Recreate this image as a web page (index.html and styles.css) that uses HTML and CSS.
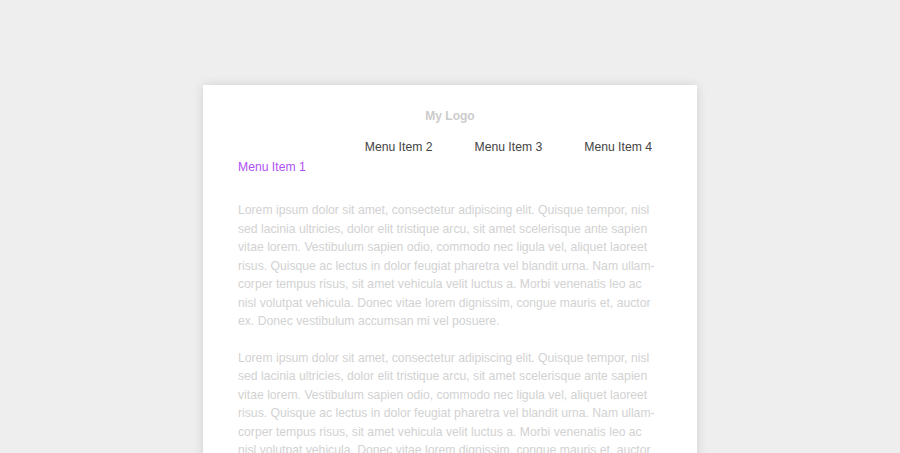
FILE: index.html
```html
<!DOCTYPE html>
<html lang="en">
<head>
  <meta charset="UTF-8">
  <title>My Logo</title>
  <meta name="viewport" content="width=device-width, initial-scale=1.0">
  <link rel="stylesheet" href="styles.css">
</head>
<body>
  <div class="page">
    <header>
      <div class="logo">My Logo</div>
      <nav>
        <div class="nav-row right">
          <a href="#">Menu Item 2</a>
          <a href="#">Menu Item 3</a>
          <a href="#">Menu Item 4</a>
        </div>
        <div class="nav-row">
          <a href="#" class="active">Menu Item 1</a>
        </div>
      </nav>
    </header>
    <div class="content">
      <p>Lorem ipsum dolor sit amet, consectetur adipiscing elit. Quisque tempor, nisl sed lacinia ultricies, dolor elit tristique arcu, sit amet scelerisque ante sapien vitae lorem. Vestibulum sapien odio, commodo nec ligula vel, aliquet laoreet risus. Quisque ac lectus in dolor feugiat pharetra vel blandit urna. Nam ullam&shy;corper tempus risus, sit amet vehicula velit luctus a. Morbi venenatis leo ac nisl volutpat vehicula. Donec vitae lorem dignissim, congue mauris et, auctor ex. Donec vestibulum accumsan mi vel posuere.</p>
      <p>Lorem ipsum dolor sit amet, consectetur adipiscing elit. Quisque tempor, nisl sed lacinia ultricies, dolor elit tristique arcu, sit amet scelerisque ante sapien vitae lorem. Vestibulum sapien odio, commodo nec ligula vel, aliquet laoreet risus. Quisque ac lectus in dolor feugiat pharetra vel blandit urna. Nam ullam&shy;corper tempus risus, sit amet vehicula velit luctus a. Morbi venenatis leo ac nisl volutpat vehicula. Donec vitae lorem dignissim, congue mauris et, auctor ex. Donec vestibulum accumsan mi vel posuere.</p>
    </div>
  </div>
</body>
</html>
```

FILE: styles.css
```css
body {
  font-family: 'Liberation Sans', Arial, sans-serif;
  background-color: #eeeeee;
  margin: 0;
  padding: 0;
}
.page {
  width: 494px;
  margin: 85px auto 0;
  background-color: #ffffff;
  box-shadow: 0 0 10px rgba(0, 0, 0, 0.12);
  padding: 23px 39px 40px 35px;
  box-sizing: border-box;
}
.logo {
  text-align: center;
  font-weight: bold;
  font-size: 12px;
  color: #cccccc;
  line-height: 16px;
  padding-left: 4px;
}
nav {
  margin-top: 13px;
}
.nav-row {
  display: flex;
  gap: 42px;
}
.nav-row.right {
  justify-content: flex-end;
  padding-right: 6px;
}
nav a {
  color: #444444;
  text-decoration: none;
  font-size: 12.2px;
  line-height: 20px;
}
nav a.active {
  color: #b150f5;
}
.content {
  margin-top: 24px;
}
.content p {
  margin: 0 0 18px;
  font-size: 12.2px;
  line-height: 18.5px;
  color: #d2d2d2;
  hyphens: manual;
}
```
